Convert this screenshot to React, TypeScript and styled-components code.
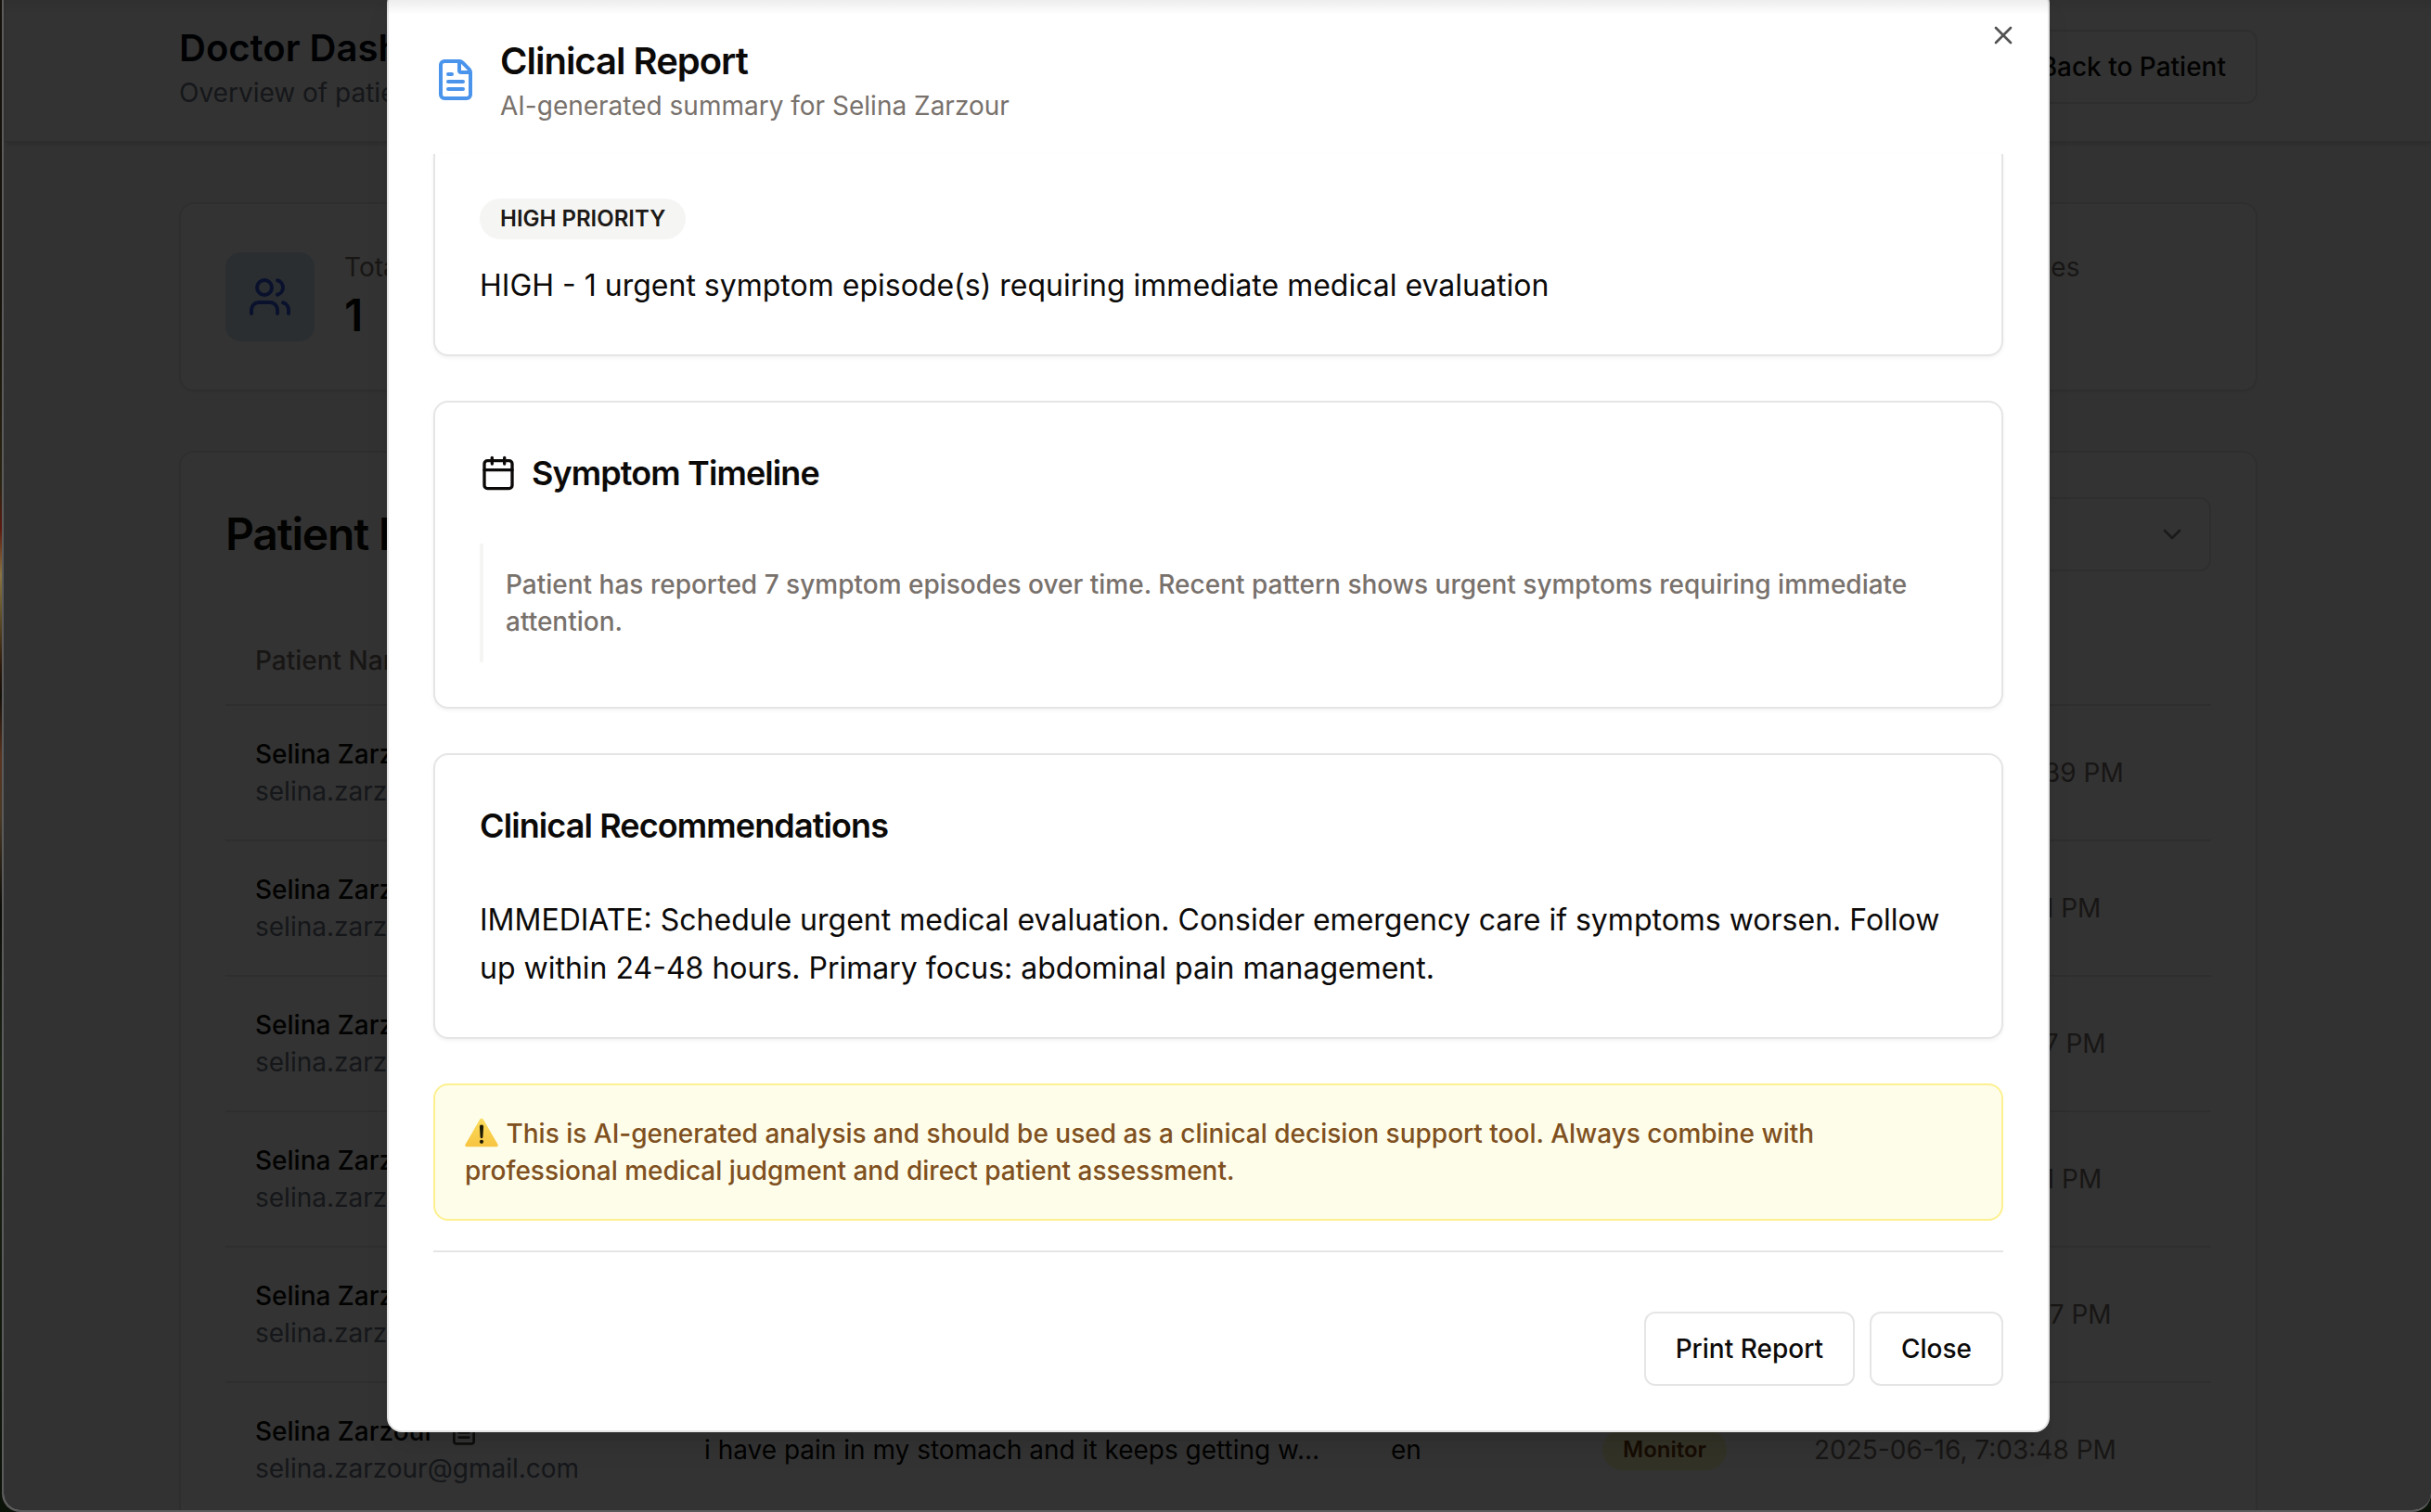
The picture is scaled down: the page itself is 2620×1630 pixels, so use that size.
import React from "react";
import styled, { createGlobalStyle, css } from "styled-components";
import { Calendar, ChevronDown, FileText, Users, X } from "lucide-react";

const GlobalStyle = createGlobalStyle`
  *, *::before, *::after { box-sizing: border-box; }
  html, body, #root { height: 100%; }
  body {
    margin: 0;
    overflow: hidden;
    font-family: Inter, "Liberation Sans", sans-serif;
    font-size: 28px;
    line-height: 40px;
    color: #0c0a09;
    -webkit-font-smoothing: antialiased;
  }
  h1, h2, h3, p { margin: 0; }
  button, select { font: inherit; color: inherit; margin: 0; }
  svg { display: block; flex-shrink: 0; }
`;

const Desktop = styled.div`
  height: 100vh;
  padding-left: 2px;
  background: linear-gradient(
    #14120a 0 20%,
    #2a2412 32%,
    #5c1a10 35%,
    #8a7440 38%,
    #6b5a30 40%,
    #2e1a0c 44%,
    #14100a 46%,
    #5a3420 50%,
    #4a3a26 54%,
    #0c0c08 60%,
    #1c2416 70%,
    #0b1208
  );
`;

const BrowserWindow = styled.div`
  position: relative;
  height: 100%;
  padding-left: 2px;
  overflow: hidden;
  border: solid #5a5a5a;
  border-width: 0 0 2px 2px;
  border-radius: 0 0 20px 20px;
  background: #f9fafb;
`;

const container = css`
  width: 100%;
  max-width: 2304px;
  margin: 0 auto;
  padding-left: 32px;
  padding-right: 32px;
`;

const TopBar = styled.header`
  background: #fff;
  border-bottom: 2px solid #e0e2e6;
  box-shadow: 0 2px 4px rgba(0, 0, 0, 0.1);
`;

const TopBarInner = styled.div`
  ${container}
  display: flex;
  align-items: center;
  justify-content: space-between;
  padding-top: 24px;
  padding-bottom: 32px;
`;

const PageTitle = styled.h1`
  font-size: 40px;
  line-height: 56px;
  font-weight: 600;
  color: #030712;
`;

const Subtitle = styled.p<{ $tone?: string }>`
  color: ${({ $tone }) => $tone ?? "#6b7280"};
`;

const Button = styled.button`
  height: 80px;
  padding: 0 32px;
  border: 2px solid #e5e5e5;
  border-radius: 12px;
  background: #fff;
  font-weight: 500;
  white-space: nowrap;
`;

const Main = styled.main`
  ${container}
  display: grid;
  gap: 64px;
  padding-top: 64px;
`;

const Stats = styled.section`
  display: grid;
  grid-template-columns: repeat(4, 1fr);
  gap: 48px;
`;

const Card = styled.section<{ $continued?: boolean }>`
  padding: 48px;
  border: 2px solid #e5e5e5;
  border-radius: 16px;
  background: #fff;
  box-shadow: 0 2px 4px rgba(0, 0, 0, 0.05);
  ${({ $continued }) =>
    $continued &&
    css`
      border-top: 0;
      border-top-left-radius: 0;
      border-top-right-radius: 0;
    `}
`;

const StatCard = styled(Card)`
  display: flex;
  align-items: center;
  gap: 32px;
`;

const StatIcon = styled.span<{ $bg: string; $fg: string }>`
  display: grid;
  place-items: center;
  width: 96px;
  height: 96px;
  border-radius: 16px;
  background: ${({ $bg }) => $bg};
  color: ${({ $fg }) => $fg};
`;

const StatText = styled.div`
  min-height: 104px;
`;

const StatLabel = styled.p`
  color: #78716c;
  white-space: nowrap;
`;

const StatValue = styled.p`
  font-size: 48px;
  line-height: 64px;
  font-weight: 600;
`;

const CardHeader = styled.div`
  display: flex;
  align-items: center;
  justify-content: space-between;
  padding-bottom: 48px;
`;

const SectionTitle = styled.h2`
  font-size: 48px;
  line-height: 48px;
  font-weight: 600;
  letter-spacing: -0.025em;
`;

const SelectBox = styled.label`
  position: relative;
  display: block;
  width: 384px;
  svg {
    position: absolute;
    right: 26px;
    top: 24px;
    opacity: 0.5;
  }
`;

const Select = styled.select`
  width: 100%;
  height: 80px;
  padding: 0 26px;
  border: 2px solid #e5e5e5;
  border-radius: 12px;
  background: #fff;
  appearance: none;
`;

const Table = styled.table`
  width: 100%;
  table-layout: fixed;
  border-collapse: collapse;
  tr { border-bottom: 2px solid #e5e5e5; }
`;

const Th = styled.th<{ $width?: number }>`
  width: ${({ $width }) => ($width ? `${$width}px` : "auto")};
  height: 96px;
  padding: 0 32px;
  text-align: left;
  font-weight: 500;
  color: #78716c;
`;

const Td = styled.td<{ $muted?: boolean }>`
  padding: 32px;
  vertical-align: middle;
  white-space: nowrap;
  color: ${({ $muted }) => ($muted ? "#78716c" : "inherit")};
`;

const NameLine = styled.div`
  display: flex;
  align-items: center;
  gap: 16px;
  height: 40px;
  font-weight: 500;
`;

const IconButton = styled.button`
  padding: 0;
  border: 0;
  background: none;
  color: #44403c;
`;

const Badge = styled.span<{ $bg: string; $fg: string }>`
  display: inline-block;
  padding: 4px 20px;
  border: 2px solid transparent;
  border-radius: 22px;
  background: ${({ $bg }) => $bg};
  color: ${({ $fg }) => $fg};
  font-size: 24px;
  line-height: 32px;
  font-weight: 600;
  vertical-align: middle;
`;

const Overlay = styled.div`
  position: absolute;
  inset: 0;
  display: flex;
  align-items: flex-start;
  justify-content: center;
  padding-left: 2px;
  background: rgba(0, 0, 0, 0.8);
`;

const ToolbarShade = styled.div`
  position: absolute;
  inset: 0 0 auto;
  height: 16px;
  background: linear-gradient(rgba(0, 0, 0, 0.07), rgba(0, 0, 0, 0));
  pointer-events: none;
`;

const Dialog = styled.div`
  position: relative;
  display: grid;
  gap: 32px;
  width: 100%;
  max-width: 1792px;
  margin-top: -12px;
  padding: 48px;
  border: 2px solid #e5e5e5;
  border-radius: 16px;
  background: #fff;
  box-shadow: 0 20px 30px -6px rgba(0, 0, 0, 0.1), 0 8px 12px -8px rgba(0, 0, 0, 0.1);
`;

const DialogHeader = styled.header`
  display: flex;
  align-items: center;
  gap: 24px;
  svg { color: #4a94ec; }
`;

const DialogTitle = styled.h2`
  font-size: 40px;
  line-height: 56px;
  font-weight: 600;
  letter-spacing: -0.025em;
`;

const DialogClose = styled.button`
  position: absolute;
  top: 32px;
  right: 32px;
  padding: 0;
  border: 0;
  background: none;
  opacity: 0.7;
`;

const Report = styled.div`
  display: grid;
  gap: 48px;
`;

const CardTitle = styled.h3`
  display: flex;
  align-items: center;
  gap: 16px;
  margin-bottom: 48px;
  font-size: 36px;
  line-height: 56px;
  font-weight: 600;
  letter-spacing: -0.025em;
`;

const Body = styled.p`
  font-size: 32px;
  line-height: 52px;
`;

const RiskBody = styled(Body)`
  margin-top: 24px;
`;

const Timeline = styled.p`
  padding: 24px;
  border-left: 4px solid #f5f5f4;
  font-weight: 500;
  color: #78716c;
`;

const BadgeRow = styled.div`
  display: flex;
`;

const Notice = styled.p`
  padding: 32px;
  border: 2px solid #fdf08f;
  border-radius: 16px;
  background: #fefdea;
  font-weight: 500;
  color: #7f5020;
  svg {
    display: inline-block;
    vertical-align: -5px;
  }
`;

const DialogFooter = styled.footer`
  display: flex;
  justify-content: flex-end;
  gap: 16px;
  padding-top: 64px;
  border-top: 2px solid #e5e5e5;
`;

const WarningIcon = () => (
  <svg width="37" height="32" viewBox="0 0 37 32" role="img" aria-label="Warning">
    <defs>
      <linearGradient id="warning-fill" x1="0" y1="0" x2="0" y2="1">
        <stop offset="0" stopColor="#fbdc5c" />
        <stop offset="1" stopColor="#f7c440" />
      </linearGradient>
    </defs>
    <path
      d="M16.3 1.6a2 2 0 0 1 3.4 0L35.4 28.6a1.8 1.8 0 0 1-1.6 2.7H2.2a1.8 1.8 0 0 1-1.6-2.7Z"
      fill="url(#warning-fill)"
    />
    <path d="M15.9 9.6a2.1 2.1 0 0 1 4.2 0l-.7 11.2a1.4 1.4 0 0 1-2.8 0Z" fill="#1d1a05" />
    <circle cx="18" cy="25.8" r="2.1" fill="#1d1a05" />
  </svg>
);

type Entry = { time: string; symptoms?: string; language?: string; level?: string };

const entries: Entry[] = [
  { time: "2025-06-16, 10:14:39 PM" },
  { time: "2025-06-16, 8:18:11 PM" },
  { time: "2025-06-16, 8:14:17 PM" },
  { time: "2025-06-16, 7:17:21 PM" },
  { time: "2025-06-16, 7:07:37 PM" },
  {
    time: "2025-06-16, 7:03:48 PM",
    symptoms: "i have pain in my stomach and it keeps getting w…",
    language: "en",
    level: "Monitor",
  },
];

const Dashboard = () => (
  <>
    <TopBar>
      <TopBarInner>
        <div>
          <PageTitle>Doctor Dashboard</PageTitle>
          <Subtitle>Overview of patients</Subtitle>
        </div>
        <Button type="button">Back to Patient</Button>
      </TopBarInner>
    </TopBar>
    <Main>
      <Stats>
        <StatCard>
          <StatIcon $bg="#d3e6f5" $fg="#2f55dc">
            <Users size={48} />
          </StatIcon>
          <StatText>
            <StatLabel>Total Patients</StatLabel>
            <StatValue>1</StatValue>
          </StatText>
        </StatCard>
        <StatCard />
        <StatCard />
        <StatCard>
          <StatIcon $bg="#fff" $fg="#fff" />
          <StatText>
            <StatLabel>Total Cases</StatLabel>
          </StatText>
        </StatCard>
      </Stats>
      <Card>
        <CardHeader>
          <SectionTitle>Patient Entries</SectionTitle>
          <SelectBox>
            <Select aria-label="Filter entries" defaultValue="">
              <option value="" />
            </Select>
            <ChevronDown size={32} />
          </SelectBox>
        </CardHeader>
        <Table>
          <thead>
            <tr>
              <Th $width={484}>Patient Name</Th>
              <Th $width={740} />
              <Th $width={228} />
              <Th $width={228} />
              <Th />
            </tr>
          </thead>
          <tbody>
            {entries.map((entry) => (
              <tr key={entry.time}>
                <Td>
                  <NameLine>
                    Selina Zarzour
                    <IconButton type="button" aria-label="Open report">
                      <FileText size={32} />
                    </IconButton>
                  </NameLine>
                  <Subtitle>selina.zarzour@gmail.com</Subtitle>
                </Td>
                <Td>{entry.symptoms}</Td>
                <Td>{entry.language}</Td>
                <Td>
                  {entry.level && (
                    <Badge $bg="#fef9c3" $fg="#713f12">
                      {entry.level}
                    </Badge>
                  )}
                </Td>
                <Td $muted>{entry.time}</Td>
              </tr>
            ))}
          </tbody>
        </Table>
      </Card>
    </Main>
  </>
);

const ReportDialog = () => (
  <Overlay>
    <Dialog role="dialog" aria-modal="true" aria-labelledby="report-title">
      <DialogHeader>
        <FileText size={48} />
        <div>
          <DialogTitle id="report-title">Clinical Report</DialogTitle>
          <Subtitle $tone="#78716c">AI-generated summary for Selina Zarzour</Subtitle>
        </div>
      </DialogHeader>
      <Report>
        <Card $continued>
          <BadgeRow>
            <Badge $bg="#f5f5f4" $fg="#1c1917">
              HIGH PRIORITY
            </Badge>
          </BadgeRow>
          <RiskBody>HIGH - 1 urgent symptom episode(s) requiring immediate medical evaluation</RiskBody>
        </Card>
        <Card>
          <CardTitle>
            <Calendar size={40} />
            Symptom Timeline
          </CardTitle>
          <Timeline>
            Patient has reported 7 symptom episodes over time. Recent pattern shows urgent symptoms requiring immediate
            attention.
          </Timeline>
        </Card>
        <Card>
          <CardTitle>Clinical Recommendations</CardTitle>
          <Body>
            IMMEDIATE: Schedule urgent medical evaluation. Consider emergency care if symptoms worsen. Follow up within
            24-48 hours. Primary focus: abdominal pain management.
          </Body>
        </Card>
        <Notice>
          <WarningIcon /> This is AI-generated analysis and should be used as a clinical decision support tool. Always
          combine with professional medical judgment and direct patient assessment.
        </Notice>
      </Report>
      <DialogFooter>
        <Button type="button">Print Report</Button>
        <Button type="button">Close</Button>
      </DialogFooter>
      <DialogClose type="button" aria-label="Close dialog">
        <X size={32} />
      </DialogClose>
    </Dialog>
  </Overlay>
);

export default function App() {
  return (
    <>
      <GlobalStyle />
      <Desktop>
        <BrowserWindow>
          <Dashboard />
          <ReportDialog />
          <ToolbarShade />
        </BrowserWindow>
      </Desktop>
    </>
  );
}
